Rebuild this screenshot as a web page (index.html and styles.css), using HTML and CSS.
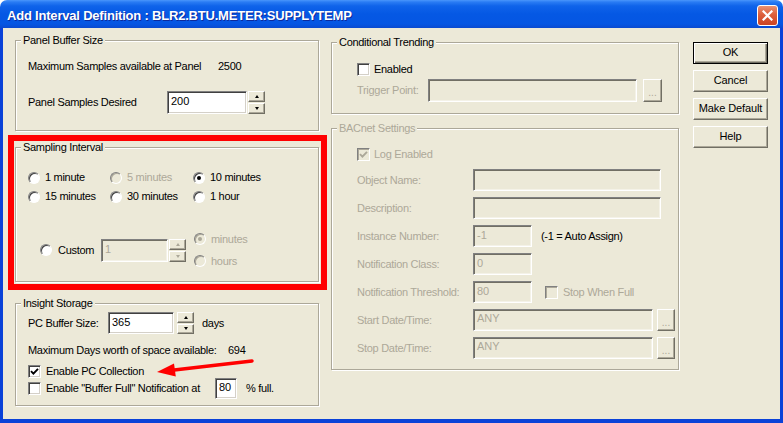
FILE: index.html
```html
<!DOCTYPE html>
<html>
<head>
<meta charset="utf-8">
<link rel="stylesheet" href="styles.css">
</head>
<body>
<div class="window">
  <div class="titlebar">
    <span class="title">Add Interval Definition : BLR2.BTU.METER:SUPPLYTEMP</span>
    <span class="close"><svg width="11" height="11" viewBox="0 0 11 11"><path d="M1.5 1.5 L9.5 9.5 M9.5 1.5 L1.5 9.5" stroke="#fff" stroke-width="2.2" stroke-linecap="square"/></svg></span>
  </div>
  <div class="client">
    <div class="col-left">
      <div class="group g-panel">
        <span class="legend">Panel Buffer Size</span>
        <div class="row r-max"><span class="w190">Maximum Samples available at Panel</span><span>2500</span></div>
        <div class="row r-desired"><span class="w139">Panel Samples Desired</span><span class="field f80">200</span><span class="spin s23"><span class="sb up"></span><span class="sb down"></span></span></div>
      </div>
      <div class="hl">
        <div class="group g-sampling">
          <span class="legend">Sampling Interval</span>
          <div class="radios">
            <span class="opt"><span class="radio"></span>1 minute</span>
            <span class="opt dis"><span class="radio"></span>5 minutes</span>
            <span class="opt"><span class="radio on"></span>10 minutes</span>
            <span class="opt"><span class="radio"></span>15 minutes</span>
            <span class="opt"><span class="radio"></span>30 minutes</span>
            <span class="opt"><span class="radio"></span>1 hour</span>
          </div>
          <div class="custom">
            <span class="opt"><span class="radio"></span><span class="w43">Custom</span></span>
            <span class="field dis f67">1</span>
            <span class="spin s23 sdis"><span class="sb up"></span><span class="sb down"></span></span>
            <div class="units">
              <span class="opt dis"><span class="radio on"></span>minutes</span>
              <span class="opt dis"><span class="radio"></span>hours</span>
            </div>
          </div>
        </div>
      </div>
      <div class="group g-insight">
        <span class="legend">Insight Storage</span>
        <div class="row r-pcbuf"><span class="w80">PC Buffer Size:</span><span class="field f66">365</span><span class="spin s22"><span class="sb up"></span><span class="sb down"></span></span><span class="days">days</span></div>
        <div class="row r-maxdays"><span class="w200">Maximum Days worth of space available:</span><span>694</span></div>
        <div class="row r-chk1"><span class="check on"><svg width="9" height="9" viewBox="0 0 9 9"><path d="M1 4.2 L3.4 6.6 L8 1.8" fill="none" stroke="#000" stroke-width="1.9"/></svg></span><span>Enable PC Collection</span></div>
        <div class="row r-chk2"><span class="check"></span><span class="w169">Enable "Buffer Full" Notification at</span><span class="field f22 h21">80</span><span class="pct">% full.</span></div>
      </div>
    </div>
    <div class="col-right">
      <div class="group g-cond">
        <span class="legend">Conditional Trending</span>
        <div class="row r-enabled"><span class="check"></span><span class="chk-lbl">Enabled</span></div>
        <div class="row r-trigger"><span class="w71 grey">Trigger Point:</span><span class="field dis f209"></span><span class="bevel dots d23">...</span></div>
      </div>
      <div class="group g-bacnet">
        <span class="legend grey">BACnet Settings</span>
        <div class="row r-log"><span class="check dis"><svg width="9" height="9" viewBox="0 0 9 9"><path d="M1 4.2 L3.4 6.6 L8 1.8" fill="none" stroke="#aca899" stroke-width="1.9"/></svg></span><span class="chk-lbl grey">Log Enabled</span></div>
        <div class="bform">
          <div class="row brow"><span class="w116 grey">Object Name:</span><span class="field dis f188"></span></div>
          <div class="row brow"><span class="w116 grey">Description:</span><span class="field dis f188"></span></div>
          <div class="row brow"><span class="w116 grey">Instance Number:</span><span class="field dis f59">-1</span><span class="note">(-1 = Auto Assign)</span></div>
          <div class="row brow"><span class="w116 grey">Notification Class:</span><span class="field dis f59">0</span></div>
          <div class="row brow"><span class="w116 grey">Notification Threshold:</span><span class="field dis f59">80</span><span class="check dis stopchk"></span><span class="grey">Stop When Full</span></div>
          <div class="row brow"><span class="w116 grey">Start Date/Time:</span><span class="field dis f180">ANY</span><span class="bevel dots d22">...</span></div>
          <div class="row brow"><span class="w116 grey">Stop Date/Time:</span><span class="field dis f180">ANY</span><span class="bevel dots d22">...</span></div>
        </div>
      </div>
    </div>
    <div class="col-btns">
      <span class="btn bevel default">OK</span>
      <span class="btn bevel">Cancel</span>
      <span class="btn bevel">Make Default</span>
      <span class="btn bevel">Help</span>
    </div>
  </div>
  <svg class="arrow" width="110" height="30" viewBox="0 0 110 30">
    <path d="M102 6 L22 15.3" stroke="#f00" stroke-width="3.5" stroke-linecap="round"/>
    <path d="M7 17 L24 8.4 L25.8 21.6 Z" fill="#f00"/>
  </svg>
</div>
</body>
</html>
```
FILE: styles.css
```css
html, body {
  margin: 0;
  background: #fff;
}

.window {
  position: relative;
  width: 783px;
  height: 423px;
  display: flex;
  flex-direction: column;
  font-family: "Liberation Sans", Arial, sans-serif;
  font-size: 11px;
  line-height: 13px;
  color: #000;
  overflow: hidden;
}

.titlebar {
  flex: none;
  height: 28px;
  box-sizing: border-box;
  padding: 2px 5px 0 7px;
  display: flex;
  align-items: center;
  justify-content: space-between;
  border-radius: 7px 7px 0 0;
  background: linear-gradient(180deg, #4a96fb 0px, #2a7cf4 2px, #0f63ea 6px, #0558e4 14px, #0556e3 24px, #0a4ad0 28px);
}

.title {
  font-family: "Liberation Sans", Arial, sans-serif;
  font-weight: bold;
  font-size: 13px;
  letter-spacing: -0.2px;
  color: #fff;
  text-shadow: 1px 1px 0 #0c2a9c;
}

.close {
  width: 21px;
  height: 21px;
  box-sizing: border-box;
  border: 1px solid #fff;
  border-radius: 3px;
  display: flex;
  align-items: center;
  justify-content: center;
  background: linear-gradient(180deg, #ea9272 0%, #dc5f3c 45%, #cc4423 100%);
}

.client {
  flex: 1;
  display: flex;
  align-items: flex-start;
  background: #ece9d8;
  border-style: solid;
  border-color: #0a42d8;
  border-width: 0 3px 4px 3px;
  padding-left: 5px;
  letter-spacing: -0.3px;
  white-space: nowrap;
}

.col-left {
  flex: none;
  width: 319px;
  padding-top: 12px;
}

.col-right {
  flex: none;
  width: 348px;
  margin-left: 4px;
  padding-top: 14px;
}

.col-btns {
  flex: none;
  width: 75px;
  margin-left: 14px;
  padding-top: 14px;
  display: flex;
  flex-direction: column;
  gap: 6px;
}

/* group boxes */
.group {
  box-sizing: border-box;
  border: 1px solid #aca899;
  box-shadow: 1px 1px 0 #fff, inset 1px 1px 0 #fff;
  padding-left: 12px;
}

.legend {
  display: block;
  width: fit-content;
  margin: -7px 0 0 -7px;
  padding: 0 2px;
  background: #ece9d8;
  line-height: 13px;
}

.col-right .group { padding-left: 25px; }
.col-right .legend { margin-left: -20px; }

.row {
  display: flex;
  align-items: center;
}

.grey, .dis { color: #aca899; }

.w43 { width: 43px; }
.w71 { width: 71px; }
.w80 { width: 80px; }
.w116 { width: 116px; }
.w139 { width: 139px; }
.w169 { width: 169px; }
.w190 { width: 190px; }
.w200 { width: 200px; }

/* fields */
.field {
  box-sizing: border-box;
  height: 23px;
  background: #fff;
  border: 1px solid;
  border-color: #808080 #fff #fff #808080;
  box-shadow: inset 1px 1px 0 #404040, inset -1px -1px 0 #d4d0c8;
  padding: 3px 0 0 3px;
  line-height: 13px;
  letter-spacing: 0;
}
.field.dis {
  background: #ece9d8;
  color: #aca899;
  box-shadow: inset 1px 1px 0 #716f64, inset -1px -1px 0 #f4f2e8;
}
.h21 { height: 21px; padding-top: 2px; }
.f22 { width: 22px; }
.f59 { width: 59px; height: 22px; }
.f66 { width: 66px; height: 22px; }
.f67 { width: 67px; }
.f80 { width: 80px; }
.f180 { width: 180px; height: 22px; padding-top: 2px; }
.f188 { width: 188px; height: 22px; }
.f209 { width: 209px; }

/* bevel / buttons */
.bevel {
  box-sizing: border-box;
  background: #ece9d8;
  border: 1px solid;
  border-color: #fff #716f64 #716f64 #fff;
  box-shadow: inset -1px -1px 0 #aca899;
}

.btn {
  height: 22px;
  display: flex;
  align-items: center;
  justify-content: center;
  padding-bottom: 1px;
  letter-spacing: -0.1px;
}
.btn.default {
  border: 1px solid #000;
  box-shadow: inset 1px 1px 0 #fff, inset -1px -1px 0 #716f64, inset -2px -2px 0 #aca899;
}

.dots {
  width: 19px;
  display: flex;
  align-items: center;
  justify-content: center;
  color: #aca899;
  font-size: 10px;
  padding-top: 4px;
  letter-spacing: 0;
}
.d23 { height: 23px; margin-left: 6px; }
.d22 { width: 18px; height: 22px; margin-left: 4px; }

/* spinner */
.spin {
  width: 17px;
  display: flex;
  flex-direction: column;
  gap: 1px;
  margin-left: 1px;
}
.s23 { height: 23px; }
.s22 { height: 22px; margin-left: 3px; }
.sb {
  flex: 1;
  box-sizing: border-box;
  background: #ece9d8;
  border: 1px solid;
  border-color: #fff #716f64 #716f64 #fff;
  box-shadow: inset -1px -1px 0 #aca899;
  display: flex;
  align-items: center;
  justify-content: center;
}
.sb::after {
  content: "";
  border-left: 2.5px solid transparent;
  border-right: 2.5px solid transparent;
}
.sb.up::after { border-bottom: 3px solid #000; }
.sb.down::after { border-top: 3px solid #000; }
.sdis .sb.up::after { border-bottom-color: #aca899; }
.sdis .sb.down::after { border-top-color: #aca899; }

/* radios */
.radio {
  flex: none;
  width: 12px;
  height: 12px;
  box-sizing: border-box;
  border-radius: 50%;
  background: #fff;
  border: 1px solid;
  border-color: #808080 #fff #fff #808080;
  box-shadow: inset 1px 1px 0 #404040;
  display: flex;
  align-items: center;
  justify-content: center;
}
.radio.on::after {
  content: "";
  width: 4px;
  height: 4px;
  border-radius: 50%;
  background: #000;
}
.dis .radio { background: #ece9d8; box-shadow: inset 1px 1px 0 #aca899; }
.dis .radio.on::after { background: #aca899; }

.opt {
  display: flex;
  align-items: center;
  gap: 5px;
}

.radios {
  margin-top: 14px;
  display: grid;
  grid-template-columns: 82px 83px auto;
  grid-auto-rows: 19px;
  align-items: center;
}

.custom {
  margin: 25px 0 0 12px;
  display: flex;
  align-items: center;
}
.custom > .opt { gap: 6px; }
.units {
  margin-left: 8px;
  display: flex;
  flex-direction: column;
  gap: 6px;
}
.units .opt { height: 16px; }

/* checkboxes */
.check {
  flex: none;
  width: 13px;
  height: 13px;
  box-sizing: border-box;
  background: #fff;
  border: 1px solid;
  border-color: #808080 #fff #fff #808080;
  box-shadow: inset 1px 1px 0 #404040, inset -1px -1px 0 #d4d0c8;
  display: flex;
  align-items: center;
  justify-content: center;
}
.check.dis {
  background: #ece9d8;
  box-shadow: inset 1px 1px 0 #aca899;
}

/* left groups */
.g-panel {
  margin-left: 7px;
  width: 304px;
  height: 91px;
}
.r-max { margin-top: 13px; }
.r-desired { margin-top: 18px; height: 23px; }

.hl {
  margin-top: 4px;
  width: 319px;
  height: 155px;
  box-sizing: border-box;
  border: 6px solid #f00;
}
.g-sampling {
  margin: 6px 0 0 1px;
  width: 304px;
  height: 135px;
}

.g-insight {
  margin: 13px 0 0 7px;
  width: 304px;
  height: 103px;
}
.r-pcbuf { margin-top: 2px; height: 22px; }
.days { margin-left: 8px; }
.r-maxdays { margin-top: 10px; }
.r-chk1 { margin-top: 8px; height: 13px; gap: 5px; }
.r-chk2 { height: 21px; gap: 5px; }
.r-chk2 .w169 { width: 164px; }
.pct { margin-left: 4px; }

/* right groups */
.g-cond { height: 72px; }
.r-enabled { margin-top: 14px; height: 13px; }
.chk-lbl { margin-left: 4px; }
.r-trigger { margin-top: 3px; height: 23px; }

.g-bacnet {
  margin-top: 14px;
  height: 242px;
}
.r-log { margin-top: 13px; height: 13px; }
.bform {
  margin-top: 8px;
  display: flex;
  flex-direction: column;
  gap: 6px;
}
.brow { height: 22px; }
.note { margin-left: 9px; }
.stopchk { margin: 0 5px 0 13px; }

.arrow {
  position: absolute;
  left: 150px;
  top: 355px;
}
```
